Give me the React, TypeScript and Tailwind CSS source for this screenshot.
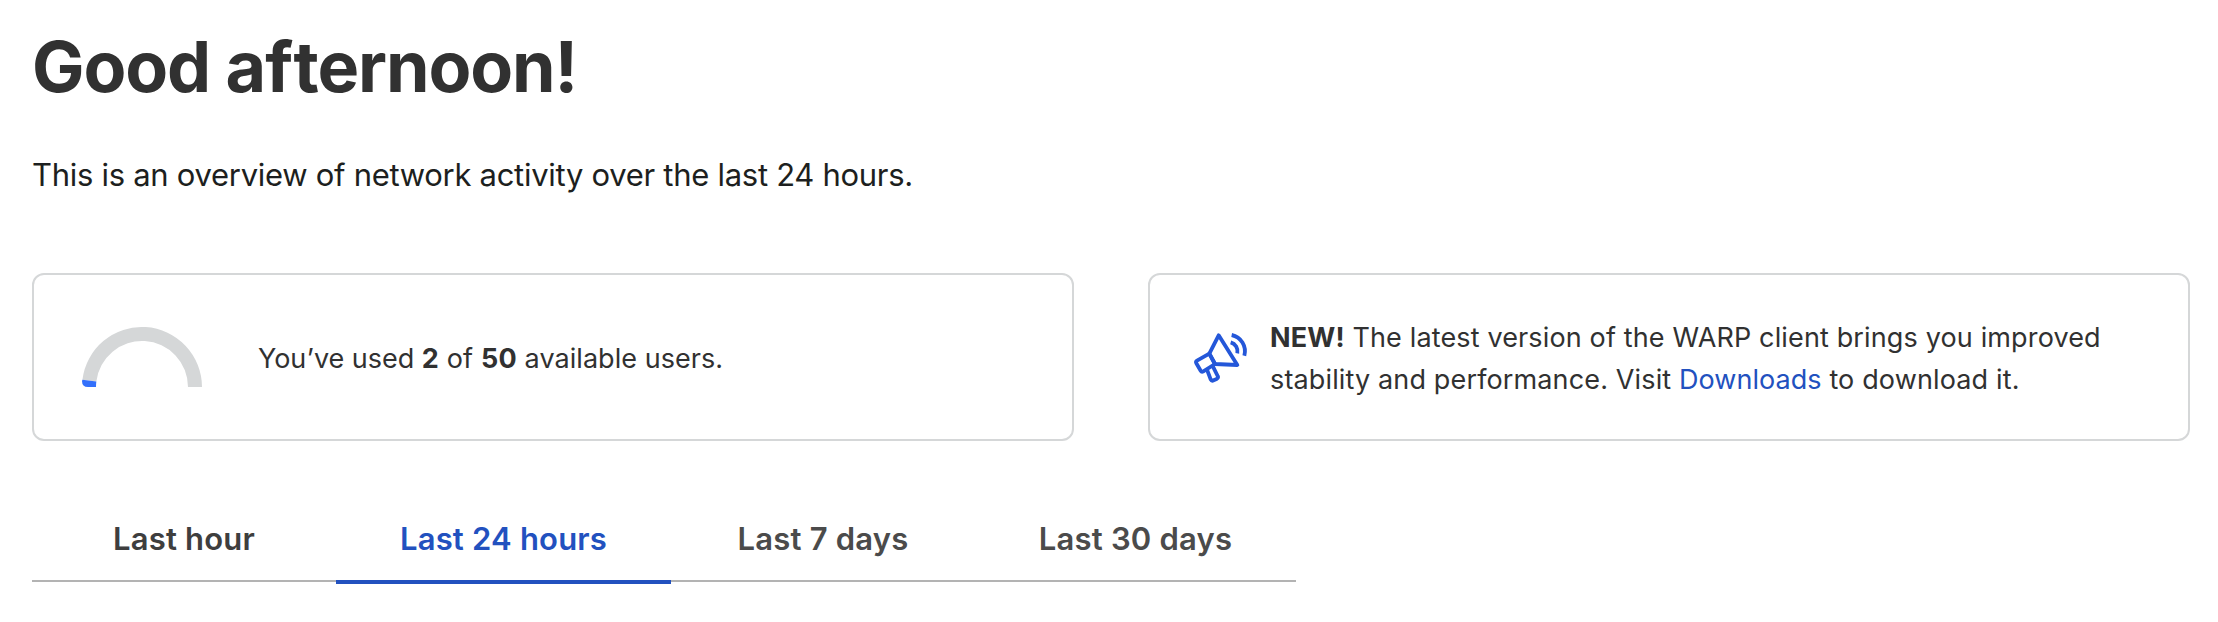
const tabs = [
  { label: "Last hour", className: "h-[84px] w-[304px] border-b-2 border-[#b3b3b3] text-[#3e3e3e]" },
  { label: "Last 24 hours", className: "h-[86px] w-[335px] border-b-4 border-[#2251bf] text-[#2251bf]" },
  { label: "Last 7 days", className: "h-[84px] w-[304px] border-b-2 border-[#b3b3b3] text-[#4b4b4b]" },
  { label: "Last 30 days", className: "h-[84px] w-[321px] border-b-2 border-[#b3b3b3] text-[#4b4b4b]" },
];

function UsageGauge() {
  return (
    <svg className="h-[60px] w-[120px] shrink-0" viewBox="0 0 120 60" aria-hidden="true">
      <path d="M0.447 52.688A60 60 0 0 1 120 60H106A46 46 0 0 0 14.343 54.394Z" fill="#d5d7d8" />
      <path d="M0.447 52.688L14.343 54.394Q14 57 14 60H6Q0 60 0 54Z" fill="#3370fb" />
    </svg>
  );
}

function MegaphoneIcon() {
  return (
    <svg
      className="size-[60px] shrink-0"
      viewBox="0 0 180 180"
      fill="none"
      stroke="#2457d9"
      strokeWidth="11.5"
      strokeLinejoin="round"
      aria-hidden="true"
    >
      <path d="M58 80L86 25L142 114L75 111Z" />
      <path d="M58 80L21 101Q16 104 19 109L32 131Q35 136 40 133L75 111Z" />
      <path d="M51 128L62 157Q65 163 71 160L80 156Q86 152 83 147L69 119" />
      <path d="M122 46A28 28 0 0 1 142 79" />
      <path d="M125 24A50 50 0 0 1 163 86" />
    </svg>
  );
}

export default function App() {
  return (
    <main className="min-h-[622px] bg-white px-8 pt-[25px] font-['Inter',sans-serif] text-[#313131]">
      <h1 className="text-[70px] leading-[84px] font-bold tracking-[-1.1px]">
        Good a<span className="tracking-[0.6px]">f</span>ternoon!
      </h1>
      <p className="mt-[42px] text-[31px] leading-[48px] tracking-[-0.29px] text-[#1d1f20]">
        This is an overview of network activity over the last 24 hours.
      </p>

      <div className="mt-[74px] grid w-[2158px] grid-cols-2 gap-[74px]">
        <section className="flex h-[168px] items-center rounded-xl border-2 border-[#d5d7d8] pl-12">
          <UsageGauge />
          <p className="ml-14 pt-1 text-[27px] leading-[42px] tracking-[0.18px]">
            <span className="tracking-[-0.05px]">You’ve used </span>
            <b>2</b> of <b>50</b> <span className="tracking-[0.05px]">available users.</span>
          </p>
        </section>
        <section className="flex h-[168px] items-center rounded-xl border-2 border-[#d5d7d8] pl-10">
          <MegaphoneIcon />
          <p className="ml-5 pt-1 text-[27px] leading-[42px] tracking-[0.14px]">
            <b>NEW!</b> The latest version of the WARP client brings you improved
            <br />
            stability and performance. Visit{" "}
            <a className="tracking-[0.05px] text-[#2251bf]">Downloads</a> to download it.
          </p>
        </section>
      </div>

      <nav className="mt-[57px] flex items-start">
        {tabs.map((tab) => (
          <button
            key={tab.label}
            className={`flex items-center justify-center text-[31px] font-semibold tracking-[0.2px] whitespace-nowrap ${tab.className}`}
          >
            {tab.label}
          </button>
        ))}
      </nav>
    </main>
  );
}
